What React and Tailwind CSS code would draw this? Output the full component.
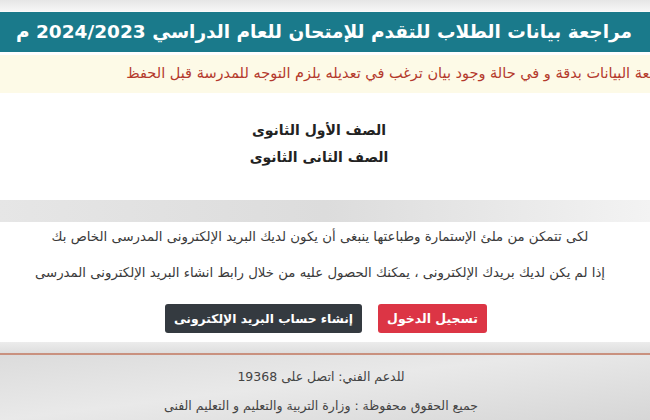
export default function App() {
  return (
    <div
      dir="rtl"
      className="w-[650px] h-[420px] overflow-hidden bg-white font-['DejaVu_Sans',sans-serif] text-[#333]"
    >
      {/* شريط المتصفح العلوي */}
      <div className="h-[12px] bg-gradient-to-b from-[#e6e6e6] to-[#f6f6f6] border-b border-[#fafafa]" />

      {/* العنوان */}
      <div className="h-[40px] bg-[#1a7a8b] flex items-center pr-[18px] overflow-hidden">
        <h1 className="text-white font-bold text-[18.5px] whitespace-nowrap leading-none">
          مراجعة بيانات الطلاب للتقدم للإمتحان للعام الدراسي 2024/2023 م
        </h1>
      </div>

      {/* تنبيه (النص مقصوص عند الحافة كما في الصورة) */}
      <div className="mt-[3px] h-[38px] bg-[#fdfae7] flex items-center overflow-hidden">
        <span className="whitespace-nowrap text-[14.5px] text-[#b4392c] mr-[-66px]">
          يرجى مراجعة البيانات بدقة و في حالة وجود بيان ترغب في تعديله يلزم التوجه للمدرسة قبل الحفظ
        </span>
      </div>

      {/* الصفوف */}
      <div className="h-[107px] flex flex-col items-center pt-[24px] pr-[12px] text-[14px] font-bold text-[#222] leading-[27px]">
        <span>الصف الأول الثانوى</span>
        <span>الصف الثانى الثانوى</span>
      </div>

      <div className="h-[22px] bg-gradient-to-l from-[#f3f3f3] via-[#dcdcdc] to-[#e6e6e6]" />

      {/* تعليمات */}
      <div className="h-[120px] flex flex-col items-center pt-[5px] pr-[10px] text-[13.3px] text-[#3a3a3a] leading-[20px]">
        <p>لكى تتمكن من ملئ الإستمارة وطباعتها ينبغى أن يكون لديك البريد الإلكترونى المدرسى الخاص بك</p>
        <p className="mt-[16px]">إذا لم يكن لديك بريدك الإلكترونى ، يمكنك الحصول عليه من خلال رابط انشاء البريد الإلكترونى المدرسى</p>
        <div className="mt-[21px] flex gap-[16px] pl-[12px]">
          <button className="h-[29px] w-[109px] rounded-[3px] bg-[#dc3545] text-white text-[12.5px] font-bold">
            تسجيل الدخول
          </button>
          <button className="h-[29px] w-[197px] rounded-[3px] bg-[#343a40] text-white text-[12.3px] font-bold">
            إنشاء حساب البريد الإلكترونى
          </button>
        </div>
      </div>

      {/* التذييل */}
      <div className="h-[78px] bg-gradient-to-br from-[#d9d9d9] via-[#e9e9e9] to-[#d6d6d6]">
        <div className="h-[11px] bg-gradient-to-b from-[#ececec] to-[#dedede]" />
        <div className="h-[2px] bg-[#c9917f]" />
        <div className="flex flex-col items-center pt-[12px] pr-[8px] text-[12.5px] text-[#444] leading-[20px]">
          <p>للدعم الفني: اتصل على 19368</p>
          <p className="mt-[9px]">جميع الحقوق محفوظة : وزارة التربية والتعليم و التعليم الفنى</p>
        </div>
      </div>
    </div>
  )
}
